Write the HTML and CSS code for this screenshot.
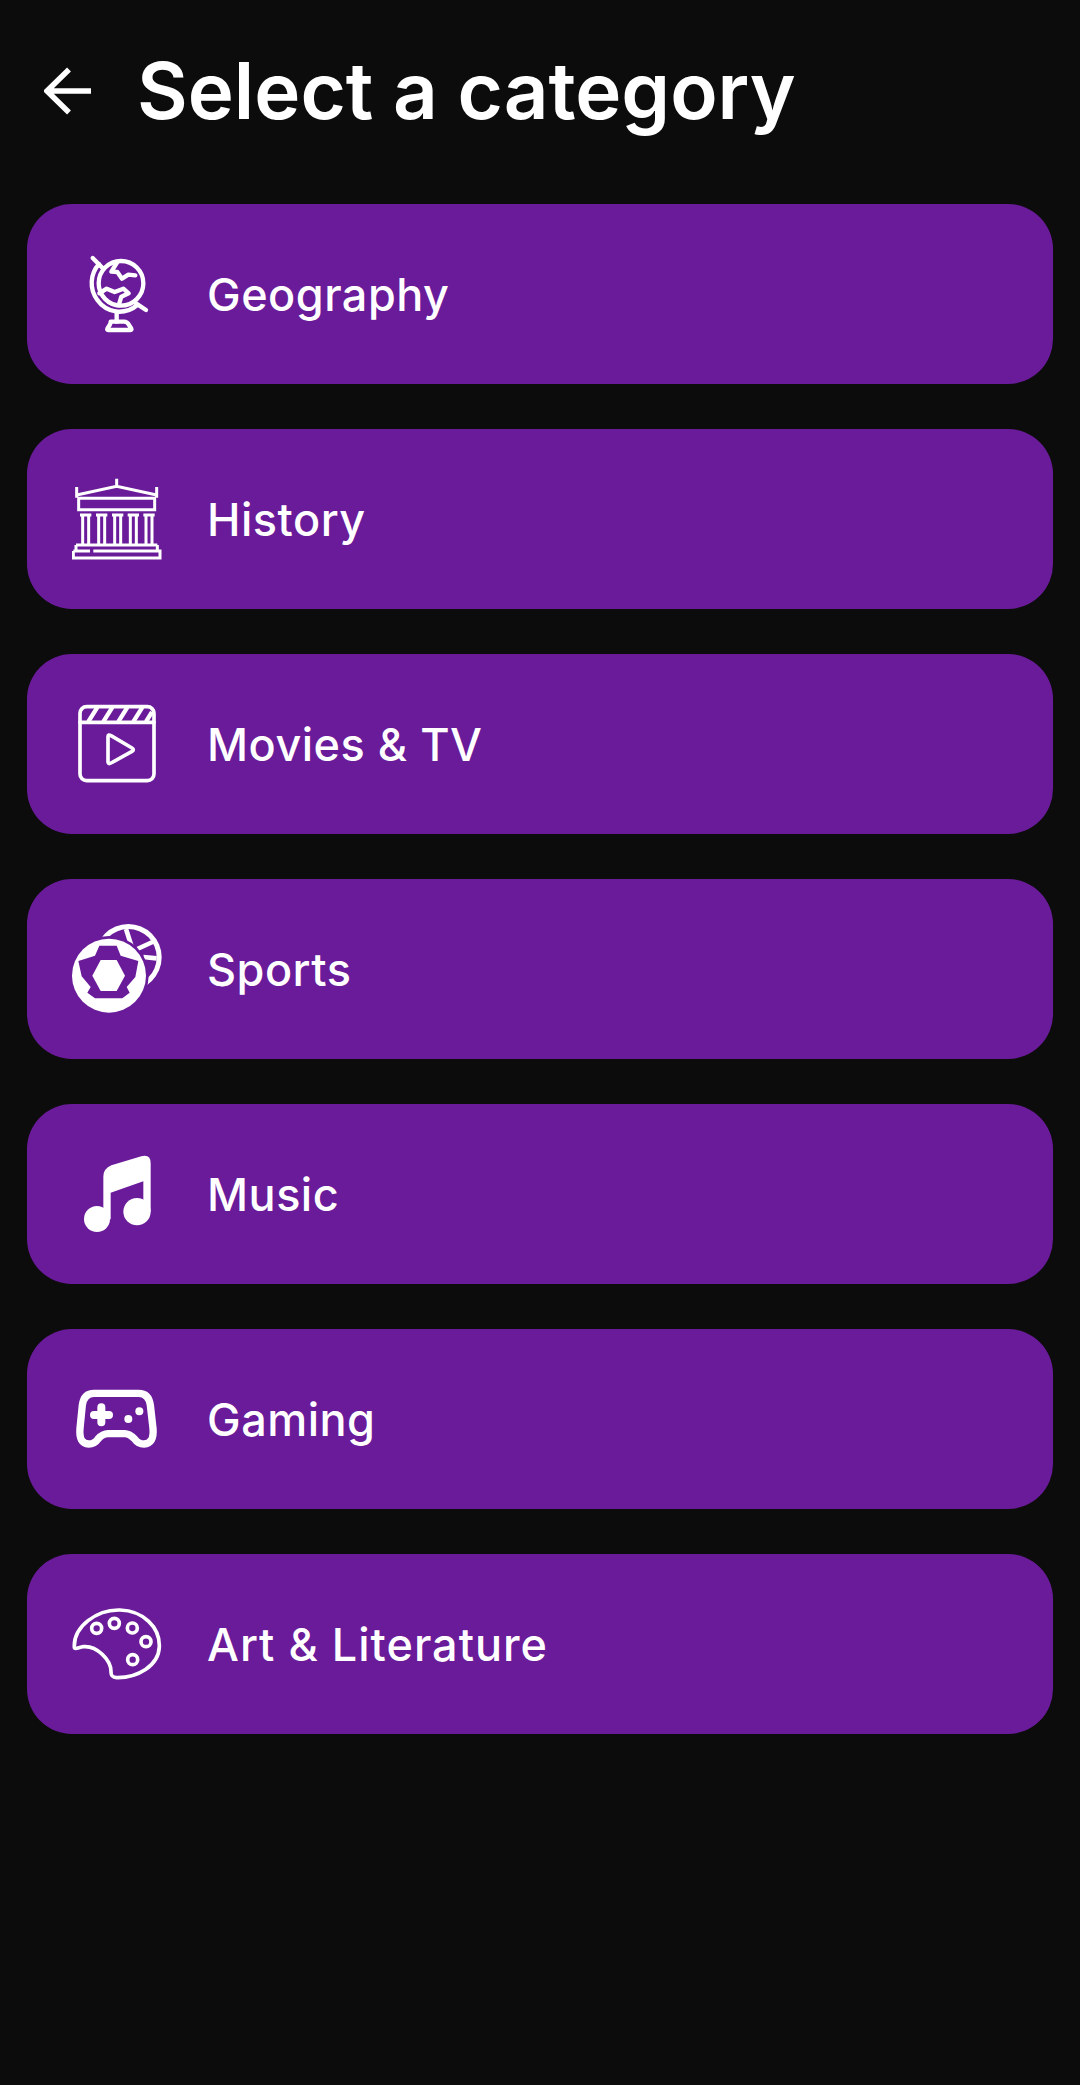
FILE: index.html
```html
<!DOCTYPE html>
<html lang="en">
<head>
<meta charset="utf-8">
<title>Select a category</title>
<link rel="stylesheet" href="styles.css">
</head>
<body>
<header class="top">
  <svg class="back" viewBox="0 0 48 48"><path d="M47 24H3M25 2.500 3 24l22 21.500"/></svg>
  <h1 class="title">Select a category</h1>
</header>
<main class="list">
  <a class="card">
    <svg class="icon line" viewBox="36 27 270 270">
      <path d="M98 54 130 86M258 210 228 190"/>
      <circle cx="183" cy="130" r="67"/>
      <path d="M117 72A85 85 0 0 0 112 180 85 85 0 0 0 170 215 85 85 0 0 0 232 195"/>
      <path d="M170 215V245"/>
      <path d="M152 245H192Q202 245 207 255L214 266Q216 270 210 270H146Q140 270 142 266L149 255Q152 249 152 245Z"/>
      <path d="M172 66 154 95 172 96 186 116 205 104 226 106M118 160 140 146 164 156 190 146 206 160 184 170 176 196"/>
    </svg>
    <span class="label">Geography</span>
  </a>
  <a class="card">
    <svg class="icon line thin" viewBox="36 27 270 270">
      <path d="M170 41V62M50 66V98M290 66V98M50 90 170 64 290 90"/>
      <path d="M52 100H288M56 100V134H284V100"/>
      <path d="M60 150H94M68 150V238M86 150V238M108 150H142M116 150V238M134 150V238M156 150H190M164 150V238M182 150V238M203 150H237M211 150V238M229 150V238M250 150H284M258 150V238M276 150V238"/>
      <path d="M48 240H292M48 240V258M292 240V258M40 258H90M100 258H300V279H40V258"/>
    </svg>
    <span class="label">History</span>
  </a>
  <a class="card">
    <svg class="icon line slim" viewBox="36 27 270 270">
      <rect x="60" y="50" width="222" height="222" rx="20"/>
      <path d="M60 97H282"/>
      <path class="hatch" d="M112 52 85 95M157 52 130 95M202 52 175 95M247 52 220 95M276 66 258 95"/>
      <path d="M144 140V214Q144 224 153 219L216 184Q224 179 216 174L153 137Q144 132 144 140Z"/>
    </svg>
    <span class="label">Movies &amp; TV</span>
  </a>
  <a class="card">
    <svg class="icon" viewBox="36 27 270 270">
      <circle class="fill" cx="205" cy="127" r="100"/>
      <circle class="cut" cx="205" cy="127" r="85"/>
      <path class="seam" d="M198 42 216 98M284 78 232 102M290 130 250 126"/>
      <circle class="halo" cx="147" cy="182" r="119"/>
      <circle class="fill" cx="147" cy="182" r="111"/>
      <path class="cut" d="M118 92H170L182 122 235 138 226 186 200 216 209 233 187 250H105L82 233 92 216 65 184 55 138 105 122Z"/>
      <path class="fill" d="M122 135H170L195 182 170 228H122L97 182Z"/>
    </svg>
    <span class="label">Sports</span>
  </a>
  <a class="card">
    <svg class="icon" viewBox="36 27 270 270">
      <path class="fill" d="M244 49Q272 42 272 70V215H250V124L152 158V238H130V110Q130 86 154 76Z"/>
      <circle class="fill" cx="111" cy="237" r="39"/>
      <circle class="fill" cx="231" cy="215" r="41"/>
    </svg>
    <span class="label">Music</span>
  </a>
  <a class="card">
    <svg class="icon line bold" viewBox="36 27 270 270">
      <path d="M102 85H236Q266 85 271 120L279 190Q283 236 252 237 234 237 224 222 208 206 194 206H144Q128 206 114 222 104 237 86 237 56 236 60 190L67 120Q72 85 102 85Z"/>
      <path class="cross" d="M124 127V172M102 150H147"/>
      <circle class="fill" cx="205" cy="162" r="12"/>
      <circle class="fill" cx="238" cy="139" r="12"/>
    </svg>
    <span class="label">Gaming</span>
  </a>
  <a class="card">
    <svg class="icon line slim" viewBox="36 27 270 270">
      <path d="M43 172C40 110 110 58 180 60 250 62 300 112 298 170 296 228 232 264 170 263 156 262 153 256 153 246 154 210 110 166 70 170 56 172 44 180 43 172Z"/>
      <circle cx="110" cy="115" r="15"/>
      <circle cx="163" cy="100" r="15"/>
      <circle cx="217" cy="114" r="15"/>
      <circle cx="258" cy="155" r="15"/>
      <circle cx="218" cy="209" r="15"/>
    </svg>
    <span class="label wide">Art &amp; Literature</span>
  </a>
</main>
</body>
</html>
```

FILE: styles.css
```css
* { box-sizing: border-box; }
html, body { margin: 0; padding: 0; }
body {
  width: 1080px;
  height: 2085px;
  background: #0c0c0c;
  color: #fff;
  font-family: Inter, "Liberation Sans", sans-serif;
  overflow: hidden;
}
.top {
  display: flex;
  align-items: center;
  height: 182px;
  padding-left: 44px;
  gap: 45px;
}
.back {
  width: 48px;
  height: 48px;
  fill: none;
  stroke: #fff;
  stroke-width: 5.5;
}
.title {
  margin: 0;
  font-size: 78px;
  line-height: 1;
  font-weight: 600;
}
.list {
  display: flex;
  flex-direction: column;
  gap: 45px;
  margin-top: 22px;
  padding: 0 27px;
}
.card {
  display: flex;
  align-items: center;
  height: 180px;
  padding-left: 45px;
  gap: 45px;
  background: #6a1b9a;
  border-radius: 45px;
}
.icon {
  width: 90px;
  height: 90px;
  flex: none;
}
.line * {
  fill: none;
  stroke: #fff;
  stroke-width: 13;
  stroke-linecap: round;
  stroke-linejoin: round;
}
.line.slim * { stroke-width: 11; }
.line.slim .hatch { stroke-width: 13; stroke-linecap: butt; }
.line.thin * { stroke-width: 9; stroke-linecap: butt; stroke-linejoin: miter; }
.line.bold * { stroke-width: 22; }
.line.bold .cross { stroke-width: 24; }
.line .fill, .fill { fill: #fff; stroke: none; }
.cut, .halo { fill: #6a1b9a; }
.seam { fill: none; stroke: #fff; stroke-width: 14; }
.label {
  font-size: 45px;
  font-weight: 450;
  line-height: 1;
  letter-spacing: 0.5px;
}
.label.wide { letter-spacing: 1px; }
```
